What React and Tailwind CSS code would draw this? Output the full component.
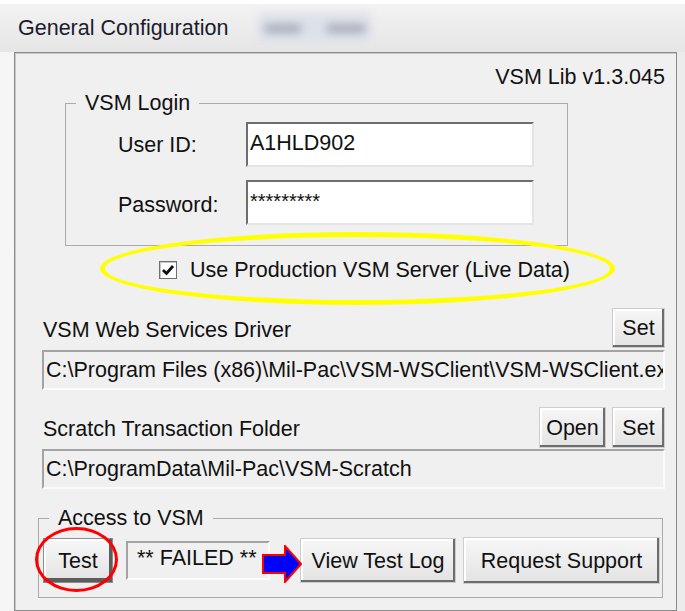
const btn =
  "flex items-center justify-center bg-gradient-to-b from-[#f7f7f7] to-[#e3e3e3] border border-[#cdcdcd] shadow-[inset_-2px_-2px_0_#6d6d6d,inset_2px_2px_0_#ffffff]";
const sunkenWhite =
  "bg-white border-2 border-t-[#6e6e6e] border-l-[#6e6e6e] border-r-[#e4e4e4] border-b-[#e4e4e4]";
const sunkenGray =
  "bg-[#f0f0f0] border-2 border-t-[#a3a3a3] border-l-[#a3a3a3] border-r-[#fbfbfb] border-b-[#fbfbfb]";

function Checkbox() {
  return (
    <div className="w-[18px] h-[18px] bg-white border border-[#6f6f6f] shadow-[inset_1px_1px_0_#c8c8c8] flex items-center justify-center">
      <svg width="14" height="14" viewBox="0 0 14 14">
        <path d="M2 7 L5.5 10.5 L12 3" fill="none" stroke="#111" strokeWidth="2.8" />
      </svg>
    </div>
  );
}

export default function App() {
  return (
    <div className="w-[685px] h-[611px] overflow-hidden bg-white font-['Liberation_Sans',Arial,sans-serif] text-[21.5px] leading-6 text-[#111]">
      <div className="mt-[4px] h-[607px] flex flex-col bg-gradient-to-r from-[#f6f6f6] via-[#e7e7e7] to-[#ececec]">
        {/* window caption */}
        <div className="h-[48px] flex items-center pl-[18px] bg-gradient-to-b from-[#f3f3f3] via-[#ececec] to-[#e6e6e6]">
          <span className="text-[#1b1b2b]">General Configuration</span>
          <div className="ml-[30px] flex items-center h-[30px] px-[6px] bg-[#dde1ea] blur-[4px] rounded-md">
            <div className="w-[38px] h-[9px] rounded-full bg-[#a9adb8]" />
            <div className="ml-[24px] w-[40px] h-[9px] rounded-full bg-[#a9adb8]" />
          </div>
        </div>

        {/* main panel */}
        <div className="relative ml-[14px] w-[663px] flex-1 border border-[#8a8a8a] bg-[#f0f0f0] shadow-[inset_1px_1px_0_#c9c9c9]">
          <div className="mt-[12px] pr-[11px] text-right">VSM Lib v1.3.045</div>

          <fieldset className="mt-[2px] ml-[50px] w-[503px] border border-[#ababab] pb-[20px]">
            <legend className="ml-[10px] px-[9px]">VSM Login</legend>
            <div className="pl-[52px]">
              <div className="mt-[7px] flex items-center">
                <span className="w-[128px]">User ID:</span>
                <div className={`${sunkenWhite} w-[288px] h-[45px] pl-[2px] pt-[7px]`}>A1HLD902</div>
              </div>
              <div className="mt-[13px] flex items-center">
                <span className="w-[128px] pt-[4px]">Password:</span>
                <div className={`${sunkenWhite} w-[288px] h-[45px] pl-[2px] pt-[7px] text-[20px]`}>*********</div>
              </div>
            </div>
          </fieldset>

          <div className="mt-[12px] ml-[144px] h-6 flex items-center gap-[13px]">
            <Checkbox />
            <span>Use Production VSM Server (Live Data)</span>
          </div>

          <div className="mt-[26px] h-[40px] flex items-center justify-between pl-[28px] pr-[11px]">
            <span className="pt-[4px]">VSM Web Services Driver</span>
            <div className={`${btn} w-[53px] h-[40px]`}>Set</div>
          </div>
          <div className={`${sunkenGray} mt-[2px] ml-[27px] w-[623px] h-[40px] pl-[2px] flex items-center overflow-hidden whitespace-nowrap`}>
            C:\Program Files (x86)\Mil-Pac\VSM-WSClient\VSM-WSClient.exe
          </div>

          <div className="mt-[17px] h-[41px] flex items-center justify-between pl-[28px] pr-[11px]">
            <span className="pt-[3px]">Scratch Transaction Folder</span>
            <div className="flex gap-[6px]">
              <div className={`${btn} w-[67px] h-[41px]`}>Open</div>
              <div className={`${btn} w-[53px] h-[41px]`}>Set</div>
            </div>
          </div>
          <div className={`${sunkenGray} mt-[1px] ml-[27px] w-[623px] h-[40px] pl-[2px] flex items-center overflow-hidden whitespace-nowrap`}>
            C:\ProgramData\Mil-Pac\VSM-Scratch
          </div>

          <fieldset className="mt-[17px] ml-[23px] w-[625px] border border-[#ababab] pb-[13px]">
            <legend className="ml-[10px] px-[9px]">Access to VSM</legend>
            <div className="mt-[8px] pl-[4px] flex items-start">
              <div className="flex items-center justify-center w-[70px] h-[45px] bg-gradient-to-b from-[#f7f7f7] to-[#e3e3e3] border border-[#8d8d8d] shadow-[inset_-3px_-4px_0_#5c5c5c,inset_2px_2px_0_#ffffff]">
                Test
              </div>
              <div className={`${sunkenGray} ml-[13px] mt-[3px] w-[144px] h-[39px] pl-[9px] pt-[3px] whitespace-nowrap`}>
                ** FAILED **
              </div>
              <div className={`${btn} ml-[30px] w-[156px] h-[45px]`}>View Test Log</div>
              <div className={`${btn} ml-[7px] -mt-[1px] w-[197px] h-[47px]`}>Request Support</div>
            </div>
          </fieldset>

          {/* highlight marks drawn over the dialog */}
          <div className="absolute left-[85px] top-[179px] w-[515px] h-[73px] rounded-[50%] border-[5px] border-[#ffff00]" />
          <div className="absolute left-[20px] top-[474px] w-[83px] h-[65px] rounded-[50%] border-[3px] border-[#ff0000]" />
          <svg className="absolute left-[247px] top-[492px]" width="40" height="38" viewBox="0 0 40 38">
            <polygon points="1,10 23,10 23,1 39,19 23,37 23,28 1,28" fill="#0000ff" stroke="#ff0000" strokeWidth="2" />
          </svg>
        </div>
      </div>
    </div>
  );
}
